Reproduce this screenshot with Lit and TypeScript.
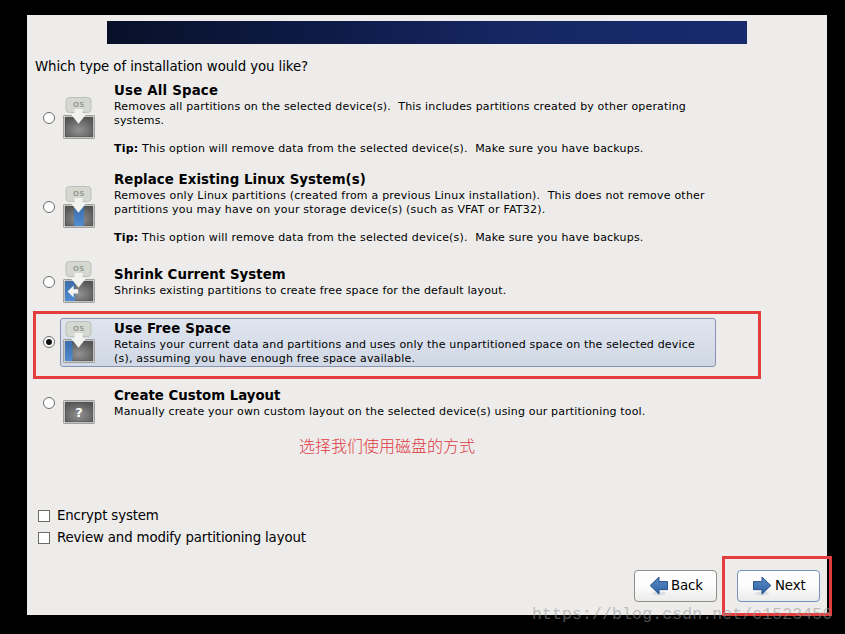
import { LitElement, html, css, svg, nothing } from "lit";
import { customElement, property, state } from "lit/decorators.js";
import { classMap } from "lit/directives/class-map.js";
import { styleMap } from "lit/directives/style-map.js";

type IconKind = "all" | "replace" | "shrink" | "free" | "custom";

interface Line {
  text: string;
  /** letter spacing in px */
  track: number;
}

interface InstallOption {
  kind: IconKind;
  title: string;
  titleTrack: number;
  lines: Line[];
  tip?: string;
}

const TIP = "This option will remove data from the selected device(s).\u00a0 Make sure you have backups.";

const OPTIONS: InstallOption[] = [
  {
    kind: "all",
    title: "Use All Space",
    titleTrack: 0.2,
    lines: [
      {
        text: "Removes all partitions on the selected device(s).\u00a0 This includes partitions created by other operating",
        track: 0.167,
      },
      { text: "systems.", track: 0.15 },
    ],
    tip: TIP,
  },
  {
    kind: "replace",
    title: "Replace Existing Linux System(s)",
    titleTrack: 0.07,
    lines: [
      {
        text: "Removes only Linux partitions (created from a previous Linux installation).\u00a0 This does not remove other",
        track: 0.205,
      },
      { text: "partitions you may have on your storage device(s) (such as VFAT or FAT32).", track: 0.198 },
    ],
    tip: TIP,
  },
  {
    kind: "shrink",
    title: "Shrink Current System",
    titleTrack: 0.05,
    lines: [{ text: "Shrinks existing partitions to create free space for the default layout.", track: 0.16 }],
  },
  {
    kind: "free",
    title: "Use Free Space",
    titleTrack: 0.13,
    lines: [
      {
        text: "Retains your current data and partitions and uses only the unpartitioned space on the selected device",
        track: 0.17,
      },
      { text: "(s), assuming you have enough free space available.", track: 0.2 },
    ],
  },
  {
    kind: "custom",
    title: "Create Custom Layout",
    titleTrack: 0,
    lines: [
      {
        text: "Manually create your own custom layout on the selected device(s) using our partitioning tool.",
        track: 0.158,
      },
    ],
  },
];

@customElement("disk-icon")
export class DiskIcon extends LitElement {
  @property() kind: IconKind = "all";

  static styles = css`
    :host { display: block; width: 32px; height: 42px; }
    svg { display: block; }
    .os { font: bold 7px "DejaVu Sans", sans-serif; fill: #9a9f96; letter-spacing: 0.4px; }
    .mark { font: bold 13px "DejaVu Sans", sans-serif; fill: #fff; }
  `;

  render() {
    const custom = this.kind === "custom";
    return html`<svg width="32" height="42" viewBox="0 0 32 42">
      <defs>
        <radialGradient id="disk" cx="50%" cy="65%" r="65%">
          <stop offset="0" stop-color="#929292" />
          <stop offset="1" stop-color="#565656" />
        </radialGradient>
        <linearGradient id="blue" x1="0" y1="0" x2="0" y2="1">
          <stop offset="0" stop-color="#3d6ca8" />
          <stop offset="1" stop-color="#4f8bd2" />
        </linearGradient>
      </defs>
      <rect x="0.5" y="18.5" width="31" height="23" rx="0.5" fill="#f5f5f3" stroke="#a0a09e" />
      <rect x="2" y="20" width="28" height="20" fill="url(#disk)" stroke="#4c4c4c" stroke-width="0.6" />
      ${this.kind === "replace" ? svg`<rect x="11" y="20" width="10" height="20" fill="url(#blue)" />` : nothing}
      ${this.kind === "shrink"
        ? svg`<rect x="2" y="20" width="10" height="20" fill="url(#blue)" />
            <path d="M4.6 30.4 10.6 24.4v3.8h4.6v4.4h-4.6v3.8z" fill="#f5f5f2" />`
        : nothing}
      ${this.kind === "free" ? svg`<rect x="2" y="20" width="7.5" height="20" fill="url(#blue)" />` : nothing}
      ${custom
        ? svg`<text class="mark" x="16" y="34.7" text-anchor="middle">?</text>`
        : svg`<rect x="3" y="0.5" width="25" height="15" rx="3.5" fill="#d5d8d0" stroke="#bcc0b8" />
            <text class="os" x="15.8" y="10.3" text-anchor="middle">OS</text>
            <path d="M11.5 12h8v5.2h3.6L15.5 26.8 7.9 17.2h3.6z" fill="#f2f2ef" />`}
    </svg>`;
  }
}

@customElement("nav-button")
export class NavButton extends LitElement {
  @property() label = "";
  @property({ type: Boolean }) forward = false;

  static styles = css`
    :host { display: block; }
    .button {
      box-sizing: border-box; width: 83px; height: 32px; padding: 0 0 0 14px;
      display: flex; align-items: center; gap: 2px;
      border: 1px solid #8d8d8a; border-radius: 4px;
      background: linear-gradient(#ffffff, #fcfcfc 50%, #ebebea);
      font: 13.33px "DejaVu Sans", sans-serif; letter-spacing: -0.1px; color: #000;
    }
    .focus { border-color: #7492bd; gap: 3px; }
    .flip { transform: scaleX(-1); }
    svg { display: block; flex: none; }
    .label { padding-bottom: 2px; }
  `;

  render() {
    return html`<button class=${classMap({ button: true, focus: this.forward })}>
      <svg class=${classMap({ flip: this.forward })} width="20" height="20" viewBox="0 0 20 20">
        <defs>
          <linearGradient id="arrow" x1="0" y1="0" x2="0" y2="1">
            <stop offset="0" stop-color="#5c8cc6" />
            <stop offset="1" stop-color="#2e62a6" />
          </linearGradient>
        </defs>
        <ellipse cx="10" cy="17.5" rx="7" ry="2" fill="#dcdfe4" />
        <path d="M1.2 9.5 10 1v4.6h8.5v8H10v4.6z" fill="url(#arrow)" stroke="#27518a" stroke-linejoin="round" />
      </svg>
      <span class="label">${this.label}</span>
    </button>`;
  }
}

@customElement("app-root")
export class AppRoot extends LitElement {
  @state() private selected: IconKind = "free";

  static styles = css`
    :host {
      display: block; position: relative; box-sizing: border-box;
      width: 845px; height: 634px; padding: 15px 18px 19px 27px; overflow: hidden;
      background: #000; color: #000; font-family: "DejaVu Sans", sans-serif; white-space: nowrap;
    }
    .window {
      box-sizing: border-box; height: 600px; padding: 6px 7px 13px 8px;
      display: flex; flex-direction: column; background: #edeceb;
    }
    .banner { width: 640px; height: 23px; margin-left: 72px; background: linear-gradient(90deg, #081028, #0e1b48 35%, #162764 65%, #172a6b); }
    .question { height: 20px; line-height: 20px; margin: 13px 0 3px; font-size: 13.33px; letter-spacing: -0.09px; }
    .options { display: flex; flex-direction: column; }
    .option { display: grid; grid-template-columns: 25px 656px; align-items: center; height: 49px; margin-bottom: 11px; }
    .option:last-child { margin: 1px 0 0; }
    .tall { height: 76px; margin-bottom: 13px; }
    .radio {
      box-sizing: border-box; width: 12px; height: 12px; margin: -1px 0 1px 8px;
      border: 1px solid #6c6c6a; border-radius: 50%; background: #fff;
      display: grid; place-items: center;
    }
    .on::after { content: ""; width: 6px; height: 6px; border-radius: 50%; background: #111; }
    .card {
      box-sizing: border-box; height: 100%; padding: 0 0 1px 2px;
      display: grid; grid-template-columns: 51px 1fr; align-items: center;
      border: 1px solid transparent; border-radius: 3px;
    }
    .picked { border-color: #8793b4; background: linear-gradient(#e0e5ee, #d0d8e5); }
    .multi { margin: 1px 0 -1px; }
    .title { height: 18px; line-height: 18px; font-size: 13.33px; font-weight: bold; }
    .line { height: 14px; line-height: 14px; font-size: 11px; }
    .tip { letter-spacing: 0.205px; }
    .annotation {
      margin: 5px 0 0 264px; height: 24px; line-height: 24px; color: #e0393f;
      font-family: "Noto Sans CJK SC", sans-serif; font-size: 16px; font-weight: 300;
    }
    .checks { margin-top: 48px; }
    .check { display: flex; align-items: center; height: 22px; gap: 7px; padding-left: 3px; font-size: 13.33px; letter-spacing: -0.14px; }
    .check-label { padding-bottom: 1px; }
    .box { box-sizing: border-box; width: 12px; height: 12px; border: 1px solid #6c6c6a; background: #fff; }
    .buttons { margin-top: auto; display: flex; justify-content: flex-end; gap: 20px; }
    .mark { position: absolute; box-sizing: border-box; border: 3px solid #e43d3d; pointer-events: none; }
    .mark-option { left: 33px; top: 311px; width: 728px; height: 68px; }
    .mark-next { left: 722px; top: 556px; width: 110px; height: 60px; }
    .watermark {
      position: absolute; left: 532px; top: 604px; line-height: 22px;
      font-family: "Liberation Mono", monospace; font-size: 16.5px; letter-spacing: 0.11px; color: rgba(150, 150, 148, 0.55);
    }
  `;

  private option(o: InstallOption) {
    const on = o.kind === this.selected;
    const track = (px: number) => styleMap({ letterSpacing: `${px}px` });
    return html`<div class=${classMap({ option: true, tall: !!o.tip })} @click=${() => (this.selected = o.kind)}>
      <span class=${classMap({ radio: true, on })}></span>
      <div class=${classMap({ card: true, picked: on })}>
        <disk-icon .kind=${o.kind}></disk-icon>
        <div class=${classMap({ multi: o.lines.length > 1 })}>
          <div class="title" style=${track(o.titleTrack)}>${o.title}</div>
          ${o.lines.map((l) => html`<div class="line" style=${track(l.track)}>${l.text}</div>`)}
          ${o.tip ? html`<div class="line"></div><div class="line tip"><b>Tip:</b> ${o.tip}</div>` : nothing}
        </div>
      </div>
    </div>`;
  }

  render() {
    return html`
      <div class="window">
        <div class="banner"></div>
        <div class="question">Which type of installation would you like?</div>
        <div class="options">${OPTIONS.map((o) => this.option(o))}</div>
        <div class="annotation">选择我们使用磁盘的方式</div>
        <div class="checks">
          <div class="check"><span class="box"></span><span class="check-label">Encrypt system</span></div>
          <div class="check"><span class="box"></span><span class="check-label">Review and modify partitioning layout</span></div>
        </div>
        <div class="buttons">
          <nav-button label="Back"></nav-button>
          <nav-button label="Next" forward></nav-button>
        </div>
      </div>
      <div class="mark mark-option"></div>
      <div class="mark mark-next"></div>
      <div class="watermark">https://blog.csdn.net/c1523456</div>
    `;
  }
}
